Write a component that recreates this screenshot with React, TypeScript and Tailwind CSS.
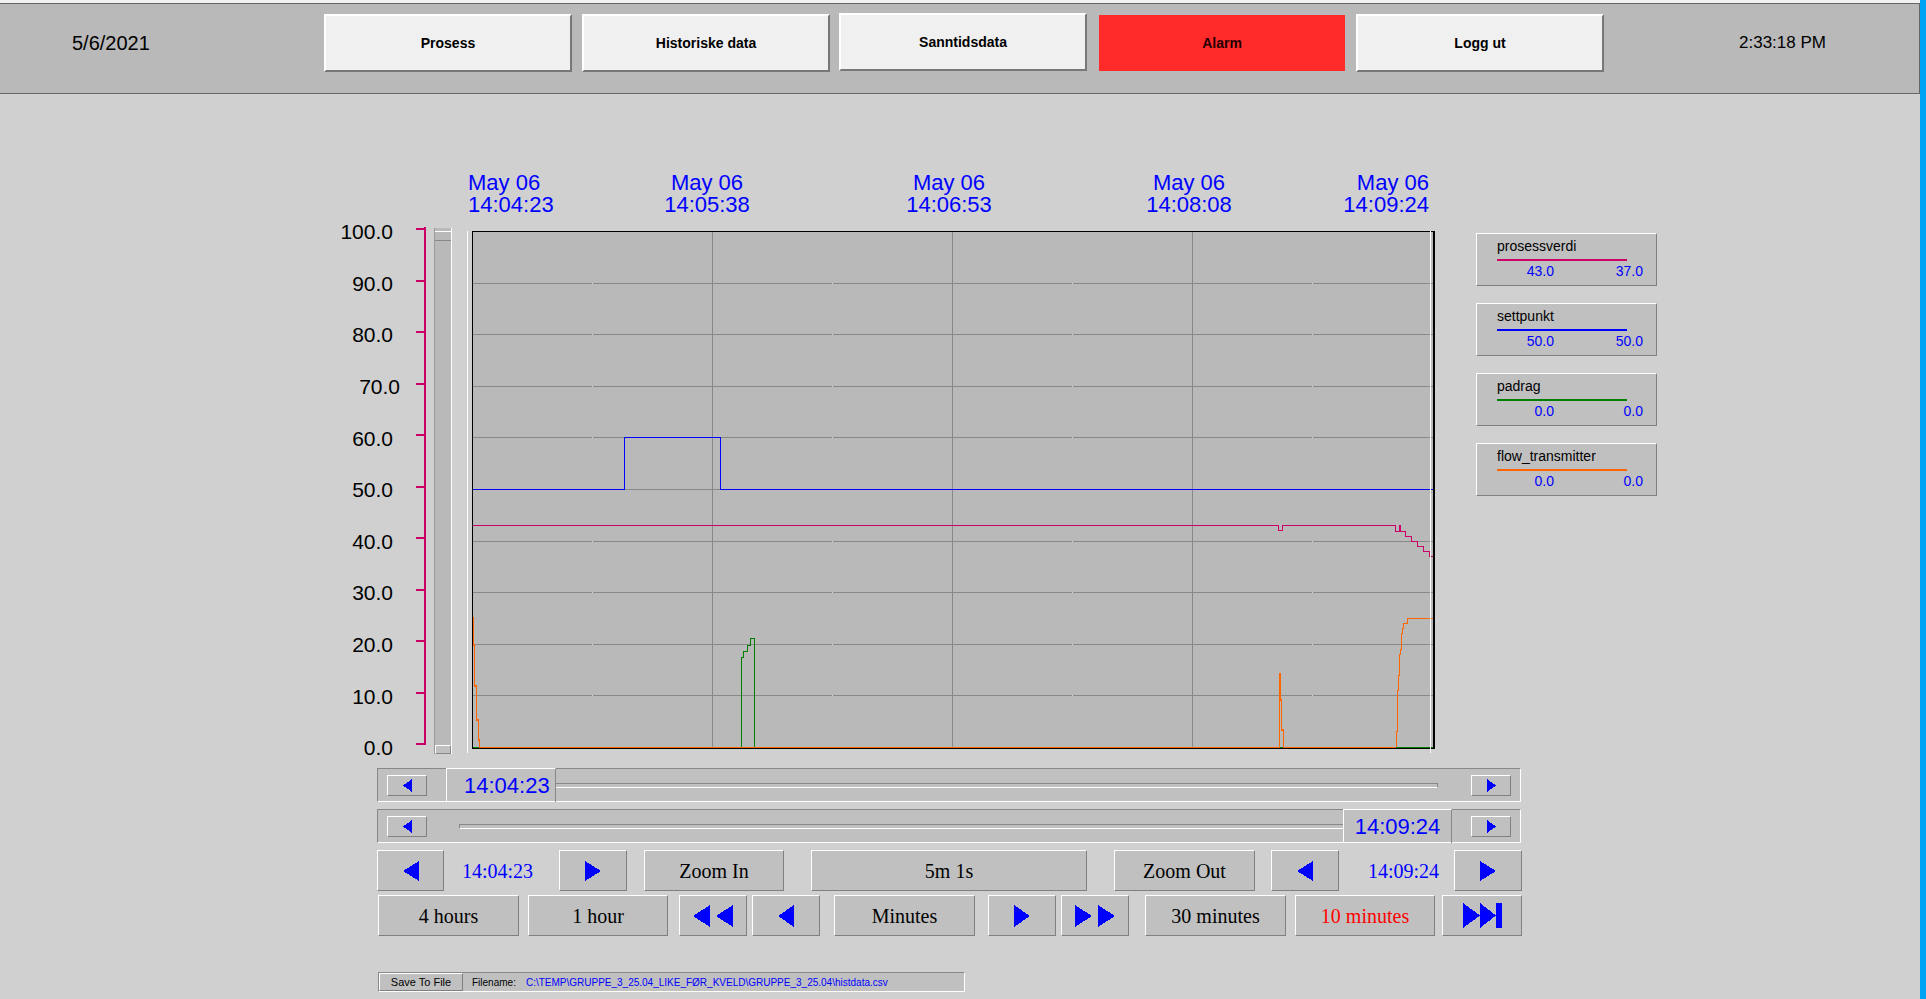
import React from "react";

const sans = { fontFamily: '"Liberation Sans", Arial, sans-serif' };

function Tri({ dir, w = 16, h = 20 }: { dir: "l" | "r"; w?: number; h?: number }) {
  const pts = dir === "l" ? `${w},0 0,${h / 2} ${w},${h}` : `0,0 ${w},${h / 2} 0,${h}`;
  return (
    <svg width={w} height={h} viewBox={`0 0 ${w} ${h}`} className="block" shapeRendering="crispEdges">
      <polygon points={pts} fill="#0000ff" />
    </svg>
  );
}

const raised =
  "bg-[#c0c0c0] border border-t-white border-l-white border-b-[#808080] border-r-[#808080] flex items-center justify-center";

function Btn({ w, children, red }: { w: string; children: React.ReactNode; red?: boolean }) {
  return (
    <div
      className={`${raised} ${w} h-full shrink-0 text-[20px] font-['Liberation_Serif'] ${red ? "text-[#ff0000]" : "text-black"}`}
    >
      {children}
    </div>
  );
}

function SmallBtn({ dir }: { dir: "l" | "r" }) {
  return (
    <div className={`${raised} w-[40px] h-[21px] shrink-0`}>
      <Tri dir={dir} w={9} h={13} />
    </div>
  );
}

const yLabels = ["100.0", "90.0", "80.0", "70.0", "60.0", "50.0", "40.0", "30.0", "20.0", "10.0", "0.0"];

const legend = [
  { name: "prosessverdi", color: "#cc0066", a: "43.0", b: "37.0" },
  { name: "settpunkt", color: "#0000ff", a: "50.0", b: "50.0" },
  { name: "padrag", color: "#008000", a: "0.0", b: "0.0" },
  { name: "flow_transmitter", color: "#ff6600", a: "0.0", b: "0.0" },
];

function Plot() {
  const X0 = 472,
    X1 = 1433,
    Y0 = 231,
    Y1 = 748;
  const hs = Array.from({ length: 9 }, (_, i) => Math.round(231 + 51.6 * (i + 1)) + 0.5);
  const vs = [712.5, 952.5, 1192.5];
  const marks = [592, 832, 1072, 1312];
  return (
    <svg width={972} height={552} viewBox="467 206 972 552" className="block shrink-0" shapeRendering="crispEdges">
      <rect x={X0} y={Y0} width={X1 - X0} height={Y1 - Y0} fill="#b9b9b9" />
      {hs.map((y) => (
        <line key={y} x1={X0} x2={X1} y1={y} y2={y} stroke="#888888" strokeWidth={1} />
      ))}
      {hs.map((y) =>
        marks.map((x) => <rect key={`${x}-${y}`} x={x} y={y - 0.5} width={1} height={1} fill="#d8d8d8" />)
      )}
      {vs.map((x) => (
        <line key={x} x1={x} x2={x} y1={Y0} y2={Y1} stroke="#888888" strokeWidth={1} />
      ))}
      {/* padrag */}
      <path
        d="M472,747.5 H741.5 V657.5 H743.5 V651.5 H747.5 V645.5 H750.5 V638.5 H754.5 V747.5 H1433"
        fill="none"
        stroke="#008000"
        strokeWidth={1}
      />
      {/* flow */}
      <path
        d="M472.5,606 V618 H473.5 V645 H474.5 V686 H476.5 V720 H478.5 V740 H479.5 V747.5 H1279.5 V673.5 H1280.5 V700 H1281.5 V730 H1283.5 V747.5 H1396"
        fill="none"
        stroke="#ff6600"
        strokeWidth={1.4}
      />
      <path
        d="M1396.5,747 V731.5 H1397.5 V690.5 H1398.5 V675.5 H1399.5 V654.5 H1400.5 V649.5 H1401.5 V633.5 H1402.5 V628.5 H1403.5 V623.5 H1407.5 V618.5 H1433"
        fill="none"
        stroke="#ff6600"
        strokeWidth={1.4}
      />
      {/* prosessverdi */}
      <path
        d="M472,525.5 H1278.5 V530.5 H1282.5 V525.5 H1395.5 V531.5 H1399.5 V525.5 H1400.5 V531.5 H1405.5 V536.5 H1411.5 V541.5 H1417.5 V546.5 H1423.5 V551.5 H1429.5 V556.5 H1433"
        fill="none"
        stroke="#cc0066"
        strokeWidth={1.2}
      />
      {/* settpunkt */}
      <path d="M472,489.5 H624.5 V437.5 H720.5 V489.5 H1433" fill="none" stroke="#0000ff" strokeWidth={1.2} />
      {/* border */}
      <line x1={472.5} x2={472.5} y1={Y0} y2={Y1 + 1} stroke="#000" />
      <line x1={X0} x2={1434} y1={231.5} y2={231.5} stroke="#000" />
      <line x1={X0} x2={1434} y1={748.5} y2={748.5} stroke="#000" />
      <rect x={1433} y={231} width={2} height={518} fill="#000" />
      {/* cursors */}
      <rect x={467} y={231} width={1} height={522} fill="#ffffff" />
      <rect x={1430} y={231} width={1} height={522} fill="#ffffff" />
    </svg>
  );
}

function Axis() {
  const ticks = Array.from({ length: 11 }, (_, i) => Math.round(228 + 51.5 * i) + 0.5);
  return (
    <svg width={37} height={552} viewBox="393 206 37 552" className="block shrink-0" shapeRendering="crispEdges">
      <rect x={424} y={227} width={2} height={518} fill="#cc0066" />
      {ticks.map((y) => (
        <line key={y} x1={416} x2={425} y1={y} y2={y} stroke="#cc0066" strokeWidth={2} />
      ))}
    </svg>
  );
}

export default function App() {
  return (
    <div className="w-[1926px] h-[999px] overflow-hidden flex bg-[#d0d0d0]" style={sans}>
      <div className="w-[1920px] shrink-0 flex flex-col">
        {/* header */}
        <div className="pt-[3px] bg-[#f2f2f2]">
          <div className="h-[91px] bg-[#b9b9b9] border-t border-b border-r border-[#666666] flex items-start pt-[10px]">
            <div className="w-[252px] ml-[72px] h-[58px] flex items-center text-[20px] text-black shrink-0">5/6/2021</div>
            <div className="w-[248px] h-[58px] shrink-0 bg-[#f0f0f0] border-2 border-t-white border-l-white border-b-[#777777] border-r-[#777777] flex items-center justify-center text-[14px] font-bold">
              Prosess
            </div>
            <div className="ml-[10px] w-[248px] h-[58px] shrink-0 bg-[#f0f0f0] border-2 border-t-white border-l-white border-b-[#777777] border-r-[#777777] flex items-center justify-center text-[14px] font-bold">
              Historiske data
            </div>
            <div className="ml-[9px] -mt-[1px] w-[248px] h-[58px] shrink-0 bg-[#f0f0f0] border-2 border-t-white border-l-white border-b-[#777777] border-r-[#777777] flex items-center justify-center text-[14px] font-bold">
              Sanntidsdata
            </div>
            <div className="ml-[12px] mt-[1px] w-[246px] h-[56px] shrink-0 bg-[#ff2a2a] flex items-center justify-center text-[14px] font-bold text-[#220000]">
              Alarm
            </div>
            <div className="ml-[11px] w-[248px] h-[58px] shrink-0 bg-[#f0f0f0] border-2 border-t-white border-l-white border-b-[#777777] border-r-[#777777] flex items-center justify-center text-[14px] font-bold">
              Logg ut
            </div>
            <div className="ml-[135px] h-[58px] flex items-center text-[17px] text-black">2:33:18 PM</div>
          </div>
        </div>

        {/* main */}
        <div className="pt-[78px] flex flex-col">
          {/* time labels */}
          <div className="relative h-[34px] text-[22px] leading-[22px] text-[#0000ff]">
            <div className="absolute left-[468px] top-0 text-left">
              <div>May 06</div>
              <div>14:04:23</div>
            </div>
            <div className="absolute left-[657px] w-[100px] top-0 text-center">
              <div>May 06</div>
              <div>14:05:38</div>
            </div>
            <div className="absolute left-[899px] w-[100px] top-0 text-center">
              <div>May 06</div>
              <div>14:06:53</div>
            </div>
            <div className="absolute left-[1139px] w-[100px] top-0 text-center">
              <div>May 06</div>
              <div>14:08:08</div>
            </div>
            <div className="absolute left-[1329px] w-[100px] top-0 text-right">
              <div>May 06</div>
              <div>14:09:24</div>
            </div>
          </div>

          {/* chart row */}
          <div className="h-[562px] flex items-start">
            <div className="w-[393px] shrink-0 flex flex-col">
              {yLabels.map((l) => (
                <div
                  key={l}
                  className={`h-[51.6px] flex items-center justify-end text-[21px] leading-none text-black ${l === "70.0" ? "-mr-[7px]" : ""}`}
                >
                  {l}
                </div>
              ))}
            </div>
            <Axis />
            <div className="ml-[4px] mt-[22px] w-[18px] h-[526px] shrink-0 flex flex-col bg-[#b9b9b9] border-l border-l-[#9a9a9a] border-r border-r-white">
              <div className="mt-[3px] h-[10px] border-t border-t-white border-b border-b-[#888888]" />
              <div className="flex-1" />
              <div className="h-[9px] border-t border-t-white border-l border-l-white border-b border-b-[#888888] border-r border-r-[#888888] bg-[#c0c0c0]" />
            </div>
            <div className="ml-[15px]">
              <Plot />
            </div>
            <div className="ml-[37px] mt-[27px] flex flex-col gap-[17px]">
              {legend.map((g) => (
                <div
                  key={g.name}
                  className="w-[181px] h-[53px] bg-[#c0c0c0] border border-t-white border-l-white border-b-[#808080] border-r-[#808080] pl-[20px] pt-[4px]"
                >
                  <div className="text-[14px] leading-[16px] text-black">{g.name}</div>
                  <div className="mt-[5px] h-[2px] w-[130px]" style={{ background: g.color }} />
                  <div className="mt-[2px] flex text-[14px] leading-[16px] text-[#0000ff]">
                    <div className="w-[57px] text-right">{g.a}</div>
                    <div className="w-[89px] text-right">{g.b}</div>
                  </div>
                </div>
              ))}
            </div>
          </div>

          {/* controls */}
          <div className="pl-[377px] flex flex-col">
            {/* row 1 */}
            <div className="flex h-[34px] w-[1144px] items-center bg-[#c0c0c0] border border-t-[#888888] border-l-[#888888] border-b-white border-r-white">
              <div className="ml-[9px]">
                <SmallBtn dir="l" />
              </div>
              <div className="ml-[19px] h-[34px] -my-[1px] w-[110px] shrink-0 border-l border-t border-l-white border-t-white border-r border-r-[#888888] flex items-center justify-start pl-[17px] text-[22px] text-[#0000ff]">
                14:04:23
              </div>
              <div className="w-[882px] h-[5px] shrink-0 border-t border-t-[#888888] border-b border-b-white border-r border-r-[#888888]" />
              <div className="ml-[33px]">
                <SmallBtn dir="r" />
              </div>
            </div>
            {/* row 2 */}
            <div className="mt-[7px] flex h-[34px] w-[1144px] items-center bg-[#c0c0c0] border border-t-[#888888] border-l-[#888888] border-b-white border-r-white">
              <div className="ml-[9px]">
                <SmallBtn dir="l" />
              </div>
              <div className="ml-[32px] w-[884px] h-[5px] shrink-0 border-t border-t-[#888888] border-b border-b-white border-l border-l-[#888888]" />
              <div className="h-[34px] -my-[1px] w-[109px] shrink-0 border-l border-t border-l-white border-t-white border-r border-r-[#888888] flex items-center justify-center text-[22px] text-[#0000ff]">
                14:09:24
              </div>
              <div className="ml-[19px]">
                <SmallBtn dir="r" />
              </div>
            </div>
            {/* row 3 */}
            <div className="mt-[7px] flex h-[41px] items-stretch">
              <Btn w="w-[67px]">
                <Tri dir="l" w={16} h={20} />
              </Btn>
              <div className="w-[115px] shrink-0 flex items-center justify-start pl-[18px] text-[20px] text-[#0000ff] font-['Liberation_Serif']">
                14:04:23
              </div>
              <Btn w="w-[68px]">
                <Tri dir="r" w={16} h={20} />
              </Btn>
              <div className="ml-[17px]" />
              <Btn w="w-[140px]">Zoom In</Btn>
              <div className="ml-[27px]" />
              <Btn w="w-[276px]">5m 1s</Btn>
              <div className="ml-[27px]" />
              <Btn w="w-[141px]">Zoom Out</Btn>
              <div className="ml-[16px]" />
              <Btn w="w-[68px]">
                <Tri dir="l" w={16} h={20} />
              </Btn>
              <div className="w-[115px] shrink-0 flex items-center justify-start pl-[29px] text-[20px] text-[#0000ff] font-['Liberation_Serif']">
                14:09:24
              </div>
              <Btn w="w-[68px]">
                <Tri dir="r" w={16} h={20} />
              </Btn>
            </div>
            {/* row 4 */}
            <div className="mt-[4px] pl-[1px] flex h-[41px] items-stretch">
              <Btn w="w-[141px]">4 hours</Btn>
              <div className="ml-[9px]" />
              <Btn w="w-[140px]">1 hour</Btn>
              <div className="ml-[11px]" />
              <Btn w="w-[68px]">
                <div className="flex">
                  <Tri dir="l" w={17} h={22} />
                  <div className="ml-[6px]">
                    <Tri dir="l" w={17} h={22} />
                  </div>
                </div>
              </Btn>
              <div className="ml-[5px]" />
              <Btn w="w-[68px]">
                <Tri dir="l" w={16} h={22} />
              </Btn>
              <div className="ml-[14px]" />
              <Btn w="w-[141px]">Minutes</Btn>
              <div className="ml-[13px]" />
              <Btn w="w-[68px]">
                <Tri dir="r" w={16} h={22} />
              </Btn>
              <div className="ml-[5px]" />
              <Btn w="w-[68px]">
                <div className="flex">
                  <Tri dir="r" w={17} h={22} />
                  <div className="ml-[6px]">
                    <Tri dir="r" w={17} h={22} />
                  </div>
                </div>
              </Btn>
              <div className="ml-[16px]" />
              <Btn w="w-[141px]">30 minutes</Btn>
              <div className="ml-[9px]" />
              <Btn w="w-[140px]" red>
                10 minutes
              </Btn>
              <div className="ml-[7px]" />
              <Btn w="w-[80px]">
                <div className="flex items-center">
                  <Tri dir="r" w={17} h={25} />
                  <Tri dir="r" w={16} h={25} />
                  <div className="w-[6px] h-[25px] bg-[#0000ff]" />
                </div>
              </Btn>
            </div>
            {/* save row */}
            <div className="mt-[36px] ml-[1px] w-[587px] h-[20px] flex items-stretch bg-[#c0c0c0] border border-t-[#888888] border-l-[#888888] border-b-white border-r-white text-[10px]">
              <div className="w-[84px] shrink-0 bg-[#c0c0c0] border border-t-white border-l-white border-b-[#808080] border-r-[#808080] flex items-center justify-center text-black text-[11px]">
                Save To File
              </div>
              <div className="ml-[9px] flex items-center text-black">Filename:</div>
              <div className="ml-[10px] flex items-center text-[#0000ff]">
                C:\TEMP\GRUPPE_3_25.04_LIKE_FØR_KVELD\GRUPPE_3_25.04\histdata.csv
              </div>
            </div>
          </div>
        </div>
      </div>
      <div className="w-[6px] shrink-0 bg-[#00a2f4]" />
    </div>
  );
}
